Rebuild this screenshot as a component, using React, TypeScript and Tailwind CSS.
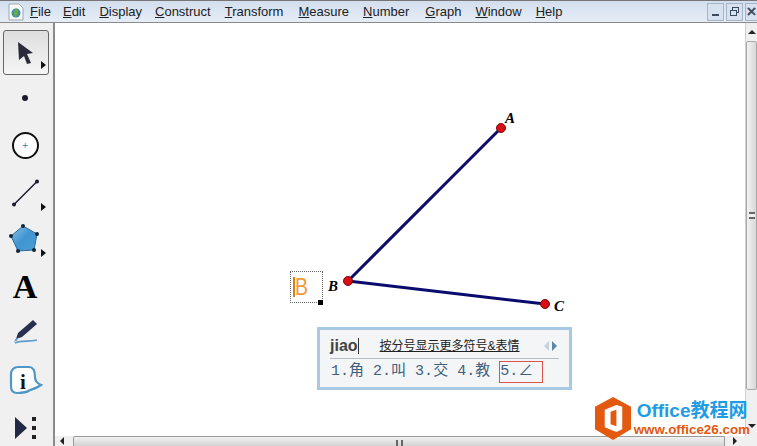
import { ReactNode } from 'react';

const sans = { fontFamily: '"Liberation Sans", "Noto Sans CJK SC", sans-serif' };

const menus = [
  { a: 'F', b: 'ile', cls: 'mr-[-2px]' },
  { a: 'E', b: 'dit', cls: '' },
  { a: 'D', b: 'isplay', cls: 'mr-[-1px]' },
  { a: 'C', b: 'onstruct', cls: '' },
  { a: 'T', b: 'ransform', cls: 'mr-[1px]' },
  { a: 'M', b: 'easure', cls: '' },
  { a: 'N', b: 'umber', cls: 'mr-[2px]' },
  { a: 'G', b: 'raph', cls: '' },
  { a: 'W', b: 'indow', cls: '' },
  { a: 'H', b: 'elp', cls: '' },
];

function Corner() {
  return <span className="absolute bottom-[5px] right-[2px] h-0 w-0 border-y-[4px] border-l-[5px] border-y-transparent border-l-[#111]" />;
}

function ToolSlot({ h, children, more }: { h: string; children: ReactNode; more?: boolean }) {
  return (
    <div className={`relative flex w-[46px] items-center justify-center ${h}`}>
      {children}
      {more && <Corner />}
    </div>
  );
}

function Toolbar() {
  return (
    <div className="flex w-[55px] shrink-0 flex-col items-start border-r-2 border-[#8a8a8a] bg-[#f0f0f0] pl-[2px] pt-[7px]">
      <ToolSlot h="h-[45px] ml-[1px] rounded-[3px] border border-[#666] bg-gradient-to-b from-[#dedede] to-[#f5f5f5]" more>
        <svg width="24" height="26" viewBox="0 0 24 26" className="mr-[3px]">
          <path d="M5 2 L20 13 L14 14 L18 23 L14 24 L11 16 L6 20 Z" fill="#2a2a3c" />
        </svg>
      </ToolSlot>
      <ToolSlot h="h-[46px]">
        <span className="h-[6px] w-[6px] rounded-full bg-[#1a1a2a]" />
      </ToolSlot>
      <ToolSlot h="h-[48px]">
        <span className="relative flex h-[27px] w-[27px] items-center justify-center rounded-full border-2 border-[#111] bg-white text-[10px] leading-none text-[#3a8fc4]">+</span>
      </ToolSlot>
      <ToolSlot h="h-[47px]" more>
        <svg width="32" height="32" viewBox="0 0 32 32">
          <line x1="5" y1="27.5" x2="28" y2="4.5" stroke="#1a1a2a" strokeWidth="1.4" />
          <circle cx="5" cy="27.5" r="2" fill="#1a1a2a" />
          <circle cx="28" cy="4.5" r="2" fill="#1a1a2a" />
        </svg>
      </ToolSlot>
      <ToolSlot h="h-[46px]" more>
        <svg width="32" height="32" viewBox="0 0 32 32">
          <defs>
            <linearGradient id="pent" x1="0" y1="0" x2="1" y2="1">
              <stop offset="0" stopColor="#8cc3e6" />
              <stop offset="0.5" stopColor="#3f95d0" />
              <stop offset="1" stopColor="#4e9fd6" />
            </linearGradient>
          </defs>
          <path d="M14 3 L28 11 L25 27 L9 28 L2 13 Z" fill="url(#pent)" stroke="#2d6a9e" strokeWidth="1" />
          {[[14, 3], [28, 11], [25, 27], [9, 28], [2, 13]].map(([x, y]) => (
            <circle key={x} cx={x} cy={y} r="2" fill="#15233a" />
          ))}
        </svg>
      </ToolSlot>
      <ToolSlot h="h-[50px]">
        <span className="text-[34px] font-bold leading-none text-black" style={{ fontFamily: '"Liberation Serif", serif' }}>A</span>
      </ToolSlot>
      <ToolSlot h="h-[40px]">
        <svg width="28" height="28" viewBox="0 0 28 28">
          <path d="M22 2 L26 6 L11 19 L5 21 L7 15 Z" fill="#28304f" />
          <path d="M4 25 C10 22 18 24 26 22" fill="none" stroke="#5b9ccc" strokeWidth="1.6" />
          <path d="M3 24 L5 20 L7 22 Z" fill="#5b9ccc" />
        </svg>
      </ToolSlot>
      <ToolSlot h="h-[58px]">
        <svg width="34" height="32" viewBox="0 0 34 32" className="ml-[2px]">
          <path d="M9 2 H20 C25 2 26 6 26 12 C26 15 27 18 32 20 C28 23 24 24 21 25 C17 28 12 28 8 28 C4 28 2 25 2 21 V9 C2 5 5 2 9 2 Z" fill="#fff" stroke="#4f97c7" strokeWidth="2.2" />
          <text x="14" y="24" textAnchor="middle" fontSize="21" fontWeight="700" fill="#151515" fontFamily="Liberation Serif">i</text>
        </svg>
      </ToolSlot>
      <ToolSlot h="h-[36px]">
        <div className="flex items-center gap-[5px]">
          <span className="h-0 w-0 border-y-[11px] border-l-[12px] border-y-transparent border-l-[#232845]" />
          <span className="flex flex-col gap-[5px]">
            <span className="h-[4px] w-[4px] bg-[#222]" />
            <span className="h-[4px] w-[4px] bg-[#222]" />
            <span className="h-[4px] w-[4px] bg-[#222]" />
          </span>
        </div>
      </ToolSlot>
    </div>
  );
}

function Label({ t, className }: { t: string; className: string }) {
  return (
    <span className={`absolute text-[15px] font-bold italic leading-none text-black ${className}`} style={{ fontFamily: '"Liberation Serif", serif' }}>
      {t}
    </span>
  );
}

function Candidate({ n, c, className }: { n: number; c: string; className?: string }) {
  return (
    <span className={`text-[15px] leading-[22px] text-[#3d5f80] ${className ?? ''}`} style={{ fontFamily: '"Liberation Mono", "Noto Sans CJK SC", monospace' }}>
      {n}.{c}
    </span>
  );
}

function ImeBox() {
  return (
    <div className="absolute left-[262px] top-[304px] h-[63px] w-[255px] border-[3px] border-[#a9c8e4] bg-[#f4f5f6] px-[10px] pt-[4px]" style={sans}>
      <div className="flex h-[25px] items-center border-b border-[#b5bcc4]">
        <span className="text-[16px] font-bold text-[#444]">jiao</span>
        <span className="h-[16px] w-px bg-[#333]" />
        <span className="ml-[21px] text-[12px] leading-none text-[#222] underline">按分号显示更多符号&amp;表情</span>
        <span className="ml-auto mr-[2px] flex items-center gap-[3px]">
          <span className="h-0 w-0 border-y-[5px] border-r-[5px] border-y-transparent border-r-[#c4d2df]" />
          <span className="h-0 w-0 border-y-[5px] border-l-[5px] border-y-transparent border-l-[#5b87ab]" />
        </span>
      </div>
      <div className="mt-[2px] flex items-center gap-[9px] pl-[1px]">
        <Candidate n={1} c="角" className="text-[#2a6a9a]" />
        <Candidate n={2} c="叫" />
        <Candidate n={3} c="交" />
        <Candidate n={4} c="教" />
        <span className="flex h-[22px] w-[44px] items-center border border-[#d9534f]">
          <Candidate n={5} c="∠" />
        </span>
      </div>
    </div>
  );
}

function Logo() {
  return (
    <div className="absolute bottom-[6px] right-[7px] flex items-start">
      <svg width="36" height="43" viewBox="0 0 37 44" className="mr-[3px]">
        <path d="M18.5 0 L37 10 V33 L18.5 44 L0 33 V10 Z" fill="#e2590f" />
        <path d="M10 13 L22 8 L28 10 V33 L22 36 L10 31 Z" fill="#fff" />
        <path d="M16 15 L22 13 V30 L16 28 Z" fill="#e2590f" />
      </svg>
      <div className="flex flex-col pt-[2px] font-bold leading-none" style={sans}>
        <span className="ml-[3px] text-[19px] leading-[23px] text-[#1f9ce4]">Office教程网</span>
        <span className="text-[13.4px] leading-[15px] text-[#e2590f]">www.office26.com</span>
      </div>
    </div>
  );
}

function Canvas() {
  return (
    <div className="relative min-w-0 flex-1 bg-white">
      <svg className="absolute inset-0" width="690" height="414">
        <line x1="293" y1="258" x2="446" y2="105" stroke="#0b0b6e" strokeWidth="3" />
        <line x1="293" y1="258" x2="490" y2="281" stroke="#0b0b6e" strokeWidth="3" />
        {[[446, 105], [293, 258], [490, 281]].map(([x, y]) => (
          <circle key={x} cx={x} cy={y} r="4.5" fill="#d90f14" stroke="#7a0b10" strokeWidth="1" />
        ))}
      </svg>
      <Label t="A" className="left-[450px] top-[88px]" />
      <Label t="B" className="left-[273px] top-[256px]" />
      <Label t="C" className="left-[499px] top-[276px]" />
      <div className="absolute left-[235px] top-[248px] flex h-[32px] w-[33px] items-center border border-dotted border-[#666] bg-white pl-[2px]">
        <span className="h-[20px] w-[1.5px] bg-[#e07b12]" />
        <span className="origin-left scale-x-[0.85] text-[23px] leading-none text-[#ef9a3d]" style={sans}>B</span>
        <span className="absolute -bottom-[3px] -right-[1px] h-[5px] w-[5px] bg-black" />
      </div>
      <ImeBox />
    </div>
  );
}

function MenuBar() {
  return (
    <div className="flex h-[23px] shrink-0 items-center border-y border-t-[#777] border-b-[#8a8a8a] bg-gradient-to-b from-[#d3deee] to-[#e6edf7] pl-[8px]" style={sans}>
      <svg width="16" height="18" viewBox="0 0 16 18" className="mr-[6px]">
        <path d="M1 1 H11 L15 5 V17 H1 Z" fill="#f8f8f8" stroke="#9aa" />
        <circle cx="8" cy="10" r="4.5" fill="#3f8fa8" />
        <path d="M8 5 C11 8 10 12 7 14 C5 11 6 8 8 5Z" fill="#6fae3c" />
      </svg>
      <div className="flex gap-[14px] text-[13px] leading-none text-[#222]">
        {menus.map(({ a, b, cls }) => (
          <span key={a} className={cls}>
            <span className="underline">{a}</span>
            {b}
          </span>
        ))}
      </div>
      <div className="ml-auto flex gap-[2px]">
        {['min', 'max', 'close'].map((k) => (
          <span key={k} className="flex h-[18px] w-[17px] items-center justify-center border border-[#a5b4c6] bg-[#d6e2f0] last:w-[12px] last:border-r-0">
            {k === 'min' && <span className="mt-[6px] h-[2px] w-[7px] bg-[#3b4a5c]" />}
            {k === 'max' && (
              <span className="relative h-[9px] w-[9px]">
                <span className="absolute right-0 top-0 h-[6px] w-[7px] border border-[#3b4a5c]" />
                <span className="absolute bottom-0 left-0 h-[6px] w-[7px] border border-[#3b4a5c] bg-[#d6e2f0]" />
              </span>
            )}
            {k === 'close' && <span className="text-[17px] font-bold leading-none text-[#3b4a5c]">×</span>}
          </span>
        ))}
      </div>
    </div>
  );
}

function VScroll() {
  return (
    <div className="flex w-[12px] shrink-0 flex-col border-l border-[#d0d0d0] bg-[#f0f0f0]">
      <div className="flex h-[18px] items-center justify-center">
        <span className="h-0 w-0 border-x-[4px] border-b-[4px] border-x-transparent border-b-[#222]" />
      </div>
      <div className="flex h-[349px] items-center justify-center rounded-[2px] border border-[#a8a8a8] bg-gradient-to-r from-[#f2f2f2] to-[#d8d8d8]">
        <span className="h-[7px] w-[6px] border-y-2 border-[#666] bg-[#f0f0f0]" />
      </div>
      <div className="flex flex-1 items-end justify-center pb-[8px]">
        <span className="h-0 w-0 border-x-[4px] border-t-[4px] border-x-transparent border-t-[#222]" />
      </div>
    </div>
  );
}

function HScroll() {
  return (
    <div className="flex h-[10px] shrink-0 items-start bg-[#f0f0f0]">
      <div className="flex h-full w-[18px] items-center justify-center pr-[4px]">
        <span className="h-0 w-0 border-y-[4px] border-r-[4px] border-y-transparent border-r-[#222]" />
      </div>
      <div className="flex h-[11px] w-[652px] justify-center rounded-t-[2px] border border-b-0 border-[#999] bg-gradient-to-b from-[#f2f2f2] to-[#cfcfcf]">
        <span className="mt-[3px] h-[7px] w-[7px] border-x-2 border-[#666]" />
      </div>
      <div className="flex h-full w-[20px] items-center justify-center">
        <span className="h-0 w-0 border-y-[4px] border-l-[4px] border-y-transparent border-l-[#222]" />
      </div>
    </div>
  );
}

export default function App() {
  return (
    <div className="relative flex h-[446px] w-[757px] flex-col overflow-hidden bg-white">
      <MenuBar />
      <div className="flex min-h-0 flex-1">
        <Toolbar />
        <div className="flex min-w-0 flex-1 flex-col">
          <div className="flex min-h-0 flex-1">
            <Canvas />
            <VScroll />
          </div>
          <HScroll />
        </div>
      </div>
      <Logo />
    </div>
  );
}
